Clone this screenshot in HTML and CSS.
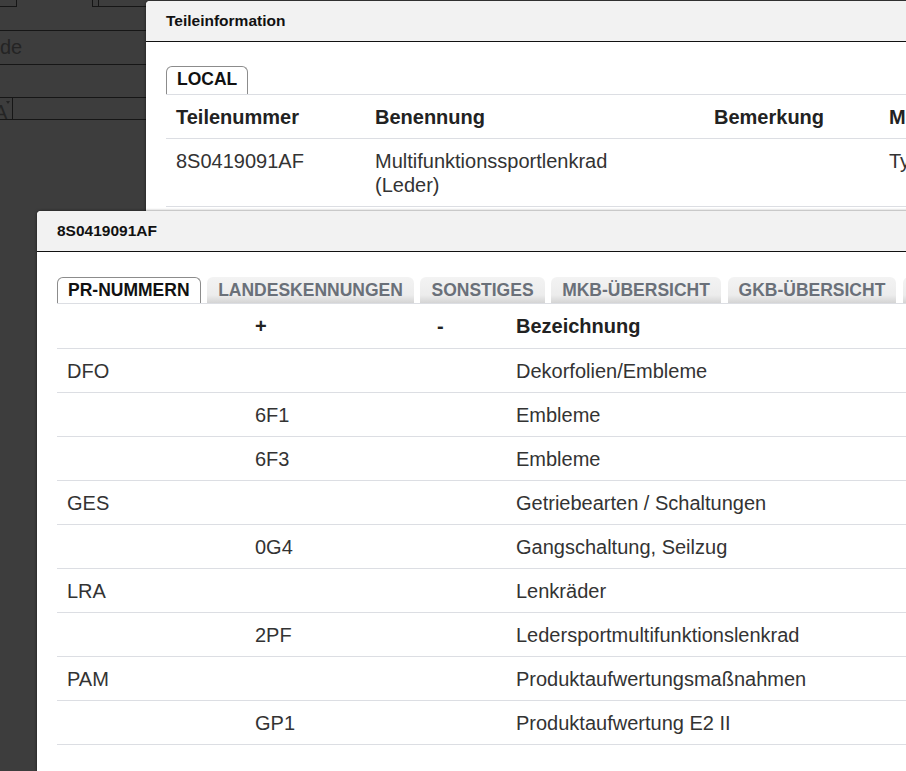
FILE: index.html
```html
<!DOCTYPE html>
<html>

<head>
    <meta charset="UTF-8">
    <title>Teileinformation</title>
    <link rel="stylesheet" href="styles.css">
</head>

<body>
    <div class="backdrop">
        <div class="bg-row bg-top">
            <span class="bg-box bg-box-left"></span>
            <span class="bg-box bg-box-right"><span class="bg-inner"></span></span>
        </div>
        <div class="bg-row bg-gap"></div>
        <div class="bg-row bg-text"><span>de</span></div>
        <div class="bg-row bg-empty"></div>
        <div class="bg-row bg-select">
            <span class="bg-pick">A<span class="bg-caret"></span></span>
        </div>
    </div>

    <section class="dialog dialog-info">
        <div class="dialog-head">Teileinformation</div>
        <div class="dialog-body">
            <div class="tabs">
                <span class="tab active tab-tall">LOCAL</span>
            </div>
            <table class="grid grid-info">
                <colgroup>
                    <col style="width: 199px">
                    <col style="width: 339px">
                    <col style="width: 175px">
                    <col>
                </colgroup>
                <thead>
                    <tr>
                        <th>Teilenummer</th>
                        <th>Benennung</th>
                        <th>Bemerkung</th>
                        <th>Menge</th>
                    </tr>
                </thead>
                <tbody>
                    <tr>
                        <td>8S0419091AF</td>
                        <td>Multifunktionssportlenkrad<br>(Leder)</td>
                        <td></td>
                        <td>Typ</td>
                    </tr>
                </tbody>
            </table>
        </div>
    </section>

    <section class="dialog dialog-part">
        <div class="dialog-head">8S0419091AF</div>
        <div class="dialog-body">
            <div class="tabs">
                <span class="tab active">PR-NUMMERN</span>
                <span class="tab">LANDESKENNUNGEN</span>
                <span class="tab">SONSTIGES</span>
                <span class="tab">MKB-ÜBERSICHT</span>
                <span class="tab">GKB-ÜBERSICHT</span>
                <span class="tab">VERWENDUNG</span>
            </div>
            <table class="grid grid-pr">
                <colgroup>
                    <col style="width: 188px">
                    <col style="width: 182px">
                    <col style="width: 79px">
                    <col>
                </colgroup>
                <thead>
                    <tr>
                        <th></th>
                        <th>+</th>
                        <th>-</th>
                        <th>Bezeichnung</th>
                    </tr>
                </thead>
                <tbody>
                    <tr><td>DFO</td><td></td><td></td><td>Dekorfolien/Embleme</td></tr>
                    <tr><td></td><td>6F1</td><td></td><td>Embleme</td></tr>
                    <tr><td></td><td>6F3</td><td></td><td>Embleme</td></tr>
                    <tr><td>GES</td><td></td><td></td><td>Getriebearten / Schaltungen</td></tr>
                    <tr><td></td><td>0G4</td><td></td><td>Gangschaltung, Seilzug</td></tr>
                    <tr><td>LRA</td><td></td><td></td><td>Lenkräder</td></tr>
                    <tr><td></td><td>2PF</td><td></td><td>Ledersportmultifunktionslenkrad</td></tr>
                    <tr><td>PAM</td><td></td><td></td><td>Produktaufwertungsmaßnahmen</td></tr>
                    <tr><td></td><td>GP1</td><td></td><td>Produktaufwertung E2 II</td></tr>
                </tbody>
            </table>
        </div>
    </section>
</body>

</html>
```

FILE: styles.css
```css
* {
    box-sizing: border-box;
    margin: 0;
    padding: 0;
}

body {
    background-color: #3d3d3d;
    font-family: "Liberation Sans", Arial, sans-serif;
    width: 906px;
    height: 771px;
    overflow: hidden;
    position: relative;
}

/* dimmed page behind the dialogs */
.backdrop {
    width: 146px;
    color: #242424;
    font-size: 20px;
}

.bg-row {
    border-bottom: 1px solid #161616;
}

.bg-top {
    height: 7px;
    border-bottom: none;
    display: flex;
}

.bg-box {
    height: 7px;
    border-bottom: 1px solid #161616;
}

.bg-box-left {
    width: 17px;
    border-right: 1px solid #161616;
}

.bg-box-right {
    flex: 1;
    margin-left: 75px;
    border-left: 1px solid #161616;
    padding-left: 5px;
}

.bg-inner {
    display: block;
    height: 6px;
    border-left: 1px solid #161616;
}

.bg-gap {
    height: 24px;
}

.bg-text {
    height: 34px;
    line-height: 32px;
}

.bg-empty {
    height: 33px;
}

.bg-select {
    height: 22px;
    overflow: hidden;
}

.bg-pick {
    display: block;
    width: 13px;
    height: 21px;
    border-right: 1px solid #161616;
    overflow: hidden;
    text-indent: -6px;
    line-height: 28px;
    position: relative;
}

.bg-caret {
    position: absolute;
    top: 3px;
    right: 2px;
    border-left: 2px solid transparent;
    border-right: 2px solid transparent;
    border-top: 3px solid #242424;
}

/* dialogs */
.dialog {
    position: absolute;
    background-color: #fff;
    border-radius: 4px 0 0 0;
    box-shadow: 0 0 3px rgba(0, 0, 0, 0.6);
    color: #333;
}

.dialog-info {
    top: 1px;
    left: 146px;
    width: 900px;
    height: 260px;
}

.dialog-part {
    top: 211px;
    left: 37px;
    width: 1000px;
    bottom: 0;
}

.dialog-head {
    height: 41px;
    padding-left: 20px;
    display: flex;
    align-items: center;
    background-color: #f2f2f2;
    border-bottom: 1px solid #111;
    border-radius: 4px 0 0 0;
    color: #111;
    font-size: 15.5px;
    font-weight: bold;
}

.dialog-body {
    padding: 25px 0 0 20px;
}

.dialog-info .dialog-body {
    padding-top: 24px;
}

.tabs {
    display: flex;
    gap: 6.6px;
    border-bottom: 1px solid #dcdee3;
    white-space: nowrap;
}

.tab {
    padding: 1px 11px;
    line-height: 24px;
    font-size: 17.5px;
    font-weight: bold;
    color: #6a7079;
    border-radius: 6px 6px 0 0;
    background: linear-gradient(#f3f3f3, #ececec 70%, #d4d4d4);
}

.tab.active {
    padding: 0 10px 1px;
    color: #111;
    background: #fff;
    border: 1px solid #8c8c8c;
    border-bottom: none;
}

.tab.tab-tall {
    padding-bottom: 3px;
}

.grid {
    width: 100%;
    table-layout: fixed;
    border-collapse: collapse;
    font-size: 20px;
    line-height: 24px;
}

.grid th,
.grid td {
    padding: 10px 10px 9px;
    text-align: left;
    vertical-align: top;
    white-space: nowrap;
    border-bottom: 1px solid #dcdee3;
}

.grid th {
    color: #222;
    font-weight: bold;
}

.grid-pr th {
    padding-bottom: 10px;
}
```
